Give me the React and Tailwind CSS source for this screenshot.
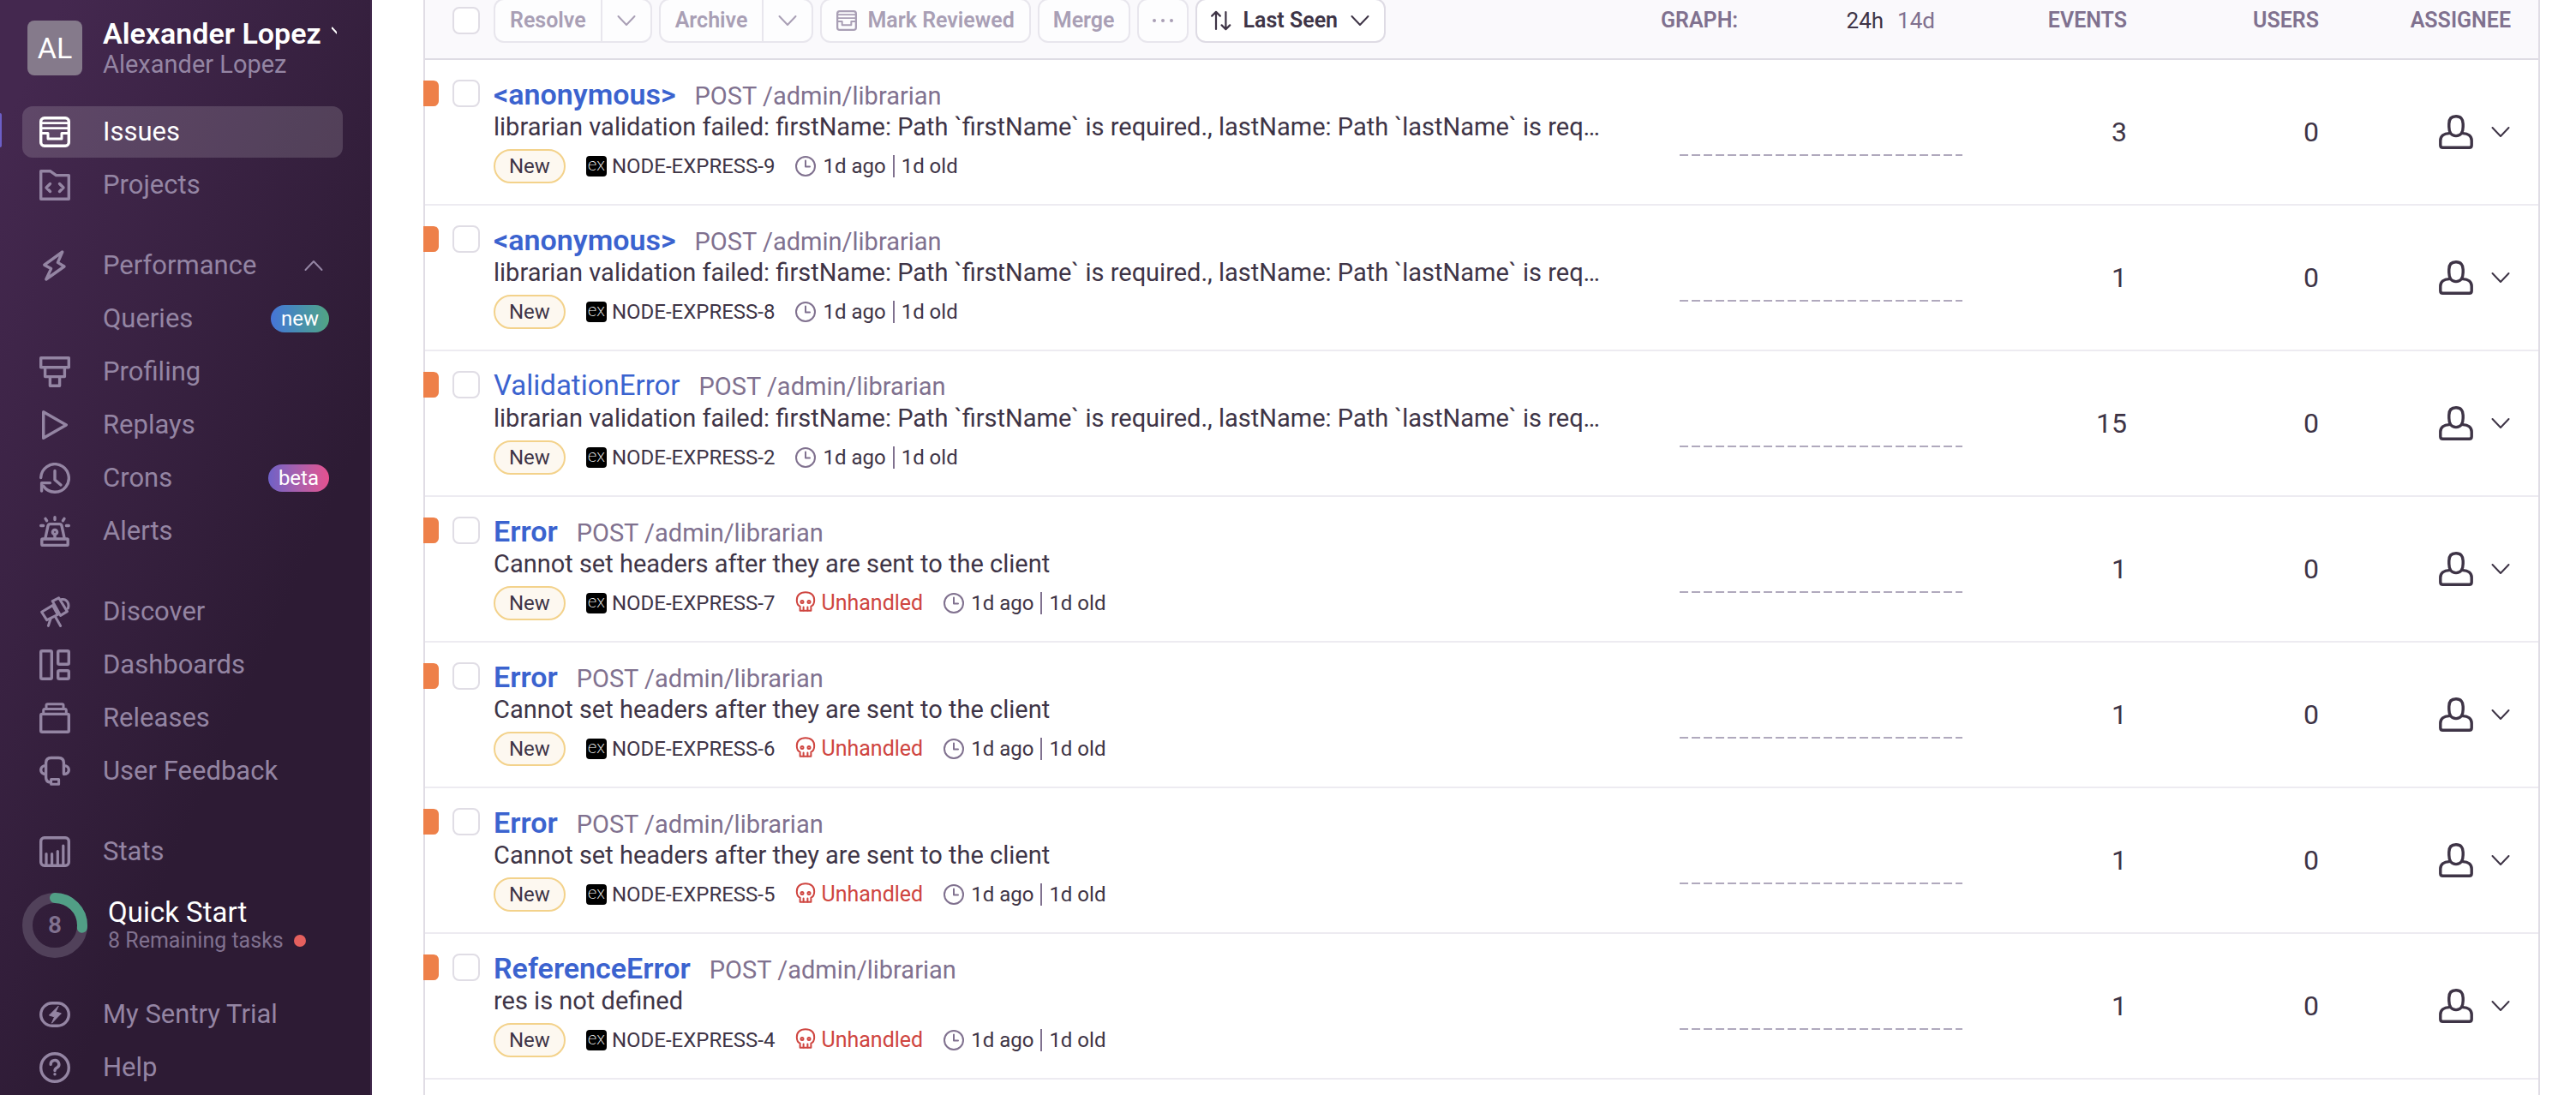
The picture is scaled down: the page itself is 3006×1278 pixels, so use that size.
import React from "react";

function Icon({ children, className = "size-9", box = 36, stroke = 3.4 }) {
  return (
    <svg
      viewBox={`0 0 ${box} ${box}`}
      className={`shrink-0 ${className}`}
      fill="none"
      stroke="currentColor"
      strokeWidth={stroke}
      strokeLinecap="round"
      strokeLinejoin="round"
      aria-hidden="true"
    >
      {children}
    </svg>
  );
}

const issuesShape = (
  <>
    <rect x="1.7" y="1.7" width="32.6" height="32.6" rx="4" />
    <path d="M2 7.6H34M2 13.6H34" strokeWidth="2.6" />
    <path d="M2 19.4H10V26H26V19.4H34" strokeWidth="3" />
  </>
);

const shapes = {
  issues: issuesShape,
  projects: (
    <>
      <path d="M1.7 1.7H12.5L19.5 6.6H34.3V34.3H1.7Z" />
      <path d="M12.5 16.5L8 21L12.5 25.5M23.5 16.5L28 21L23.5 25.5" />
    </>
  ),
  performance: <path d="M26.8 2L5.8 17.2L13.6 21.6L7.8 34L29 19L21.4 14.4Z" />,
  profiling: (
    <>
      <rect x="1.7" y="1.7" width="32.6" height="11" />
      <path d="M6.6 12.7V23.6H29.4V12.7M12.4 23.6V34.3H23.6V23.6" />
    </>
  ),
  replays: <path d="M4.7 2.7L31.3 18L4.7 33.3Z" />,
  crons: (
    <>
      <path d="M1.7 17.5A16.3 16.3 0 1 1 4.6 27.3" />
      <path d="M2.6 33V23.6H12.4M18 9.5V20L25 26" />
    </>
  ),
  alerts: (
    <>
      <rect x="2.8" y="27" width="30.4" height="7.4" rx="1" />
      <path d="M6.8 26.5L10 11.6Q10.6 9.6 12.6 9.6H23.4Q25.4 9.6 26 11.6L29.2 26.5" />
      <path d="M18 1.7V4.6M7 3.4L8.6 5.8M29 3.4L27.4 5.8M1.7 11.5H4.6M31.4 11.5H34.3M18 21.5V26" />
      <circle cx="18" cy="19" r="2.6" />
    </>
  ),
  discover: (
    <>
      <path d="M2.6 18.2L15.4 10.6L21.4 21.4L8.6 27.6Z" strokeWidth="3" />
      <path d="M15.2 5.6L22.6 1.8L32.4 17.6L24.6 22.4Z" strokeWidth="3" />
      <path d="M26 3.6C31.5 2.6 35.4 8 33.4 14M13 26.2L10.4 34.4M18.4 23.4L24.6 34.4" strokeWidth="3" />
    </>
  ),
  dashboards: (
    <>
      <rect x="1.7" y="1.7" width="12.6" height="32.6" rx="1.5" />
      <rect x="21.7" y="1.7" width="12.6" height="15.6" rx="1.5" />
      <rect x="21.7" y="24.7" width="12.6" height="9.6" rx="1.5" />
    </>
  ),
  releases: (
    <>
      <rect x="1.7" y="13.4" width="32.6" height="20.9" rx="1.5" />
      <path d="M4.7 13V9Q4.7 7.6 6.2 7.6H29.8Q31.3 7.6 31.3 9V13M8 7.4V3.2Q8 1.7 9.5 1.7H26.5Q28 1.7 28 3.2V7.4" strokeWidth="3" />
    </>
  ),
  feedback: (
    <>
      <path d="M7.6 22.5V8.5Q7.6 2.5 13.6 2.5H22.4Q28.4 2.5 28.4 8.5V21M7.6 22V25Q7.6 31 13 31" />
      <path d="M7.4 11.6C-.2 11.6-.2 21.6 7.4 21.6M28.6 11.6C36.2 11.6 36.2 21.6 28.6 21.6" />
      <rect x="13.6" y="27.6" width="9" height="5.6" strokeWidth="3" />
    </>
  ),
  stats: (
    <>
      <rect x="1.7" y="1.7" width="32.6" height="32.6" rx="4" />
      <path d="M8 20.5V33M14.6 20.5V33M21.3 17.5V33M27.8 11V33" strokeWidth="3.2" />
    </>
  ),
  trial: (
    <>
      <rect x="1.7" y="4.7" width="32.6" height="26.6" rx="13.3" />
      <path d="M22 8.4L11.4 19L17.6 20.8L14.4 28.2L25.4 16.8L19.4 15Z" fill="currentColor" strokeWidth="1" />
    </>
  ),
  help: (
    <>
      <circle cx="18" cy="18" r="16.3" />
      <path d="M13.2 14.4A4.8 4.6 0 1 1 20.6 18Q18 19.4 18 21.6M18 25.6V25.7" />
    </>
  ),
};

function Chevron({ up, className = "size-6" }) {
  return (
    <Icon className={className} box={24} stroke={2}>
      <path d={up ? "M2.5 17L12 7L21.5 17" : "M2.5 7L12 17L21.5 7"} />
    </Icon>
  );
}

function NavItem({ icon, label, active, tag, tagClass, expanded }) {
  return (
    <li className="relative">
      {active && <span className="absolute top-2 -left-[26px] h-10 w-0.5 rounded-r bg-[#6c5fc7]" />}
      <a
        href="#"
        className={`flex h-[60px] items-center rounded-xl pr-4 pl-5 text-[31px] ${
          active ? "bg-white/15 text-white" : "text-[#9485a3]"
        }`}
      >
        <span className="mr-[38px] size-9">{icon && <Icon>{shapes[icon]}</Icon>}</span>
        <span className="flex-1">{label}</span>
        {tag && (
          <span className={`flex h-8 items-center rounded-full px-3 text-[24px] text-white ${tagClass}`}>{tag}</span>
        )}
        {expanded && <Chevron up className="mr-1.5 size-6" />}
      </a>
    </li>
  );
}

function Sidebar() {
  return (
    <aside className="w-[434px] shrink-0 border-r-2 border-[#41284c] bg-[linear-gradient(294deg,#2d1b34_35%,#44284f_93%)] pt-5 pr-8 pl-[26px]">
      <button className="mb-8 flex w-full items-center gap-6 overflow-hidden pl-1.5 text-left">
        <span className="flex size-16 shrink-0 items-center justify-center rounded-lg bg-[#857a8b] text-[34px] text-white">
          AL
        </span>
        <span className="min-w-0 whitespace-nowrap">
          <span className="flex items-center gap-3">
            <span className="text-[34px] leading-[38px] font-semibold text-white">Alexander Lopez</span>
            <svg viewBox="0 0 6 9" className="mb-2 h-[9px] w-1.5 text-white" fill="none" stroke="currentColor" strokeWidth="2" aria-hidden="true">
              <path d="M0 1L7 8.5" />
            </svg>
          </span>
          <span className="block text-[29px] leading-[34px] text-[#9485a3]">Alexander Lopez</span>
        </span>
      </button>
      <nav aria-label="Primary">
        <ul className="flex flex-col gap-0.5">
          <NavItem icon="issues" label="Issues" active />
          <NavItem icon="projects" label="Projects" />
        </ul>
        <ul className="mt-[34px] flex flex-col gap-0.5">
          <NavItem icon="performance" label="Performance" expanded />
          <NavItem label="Queries" tag="new" tagClass="bg-linear-to-r from-[#4674d8] to-[#52a482]" />
          <NavItem icon="profiling" label="Profiling" />
          <NavItem icon="replays" label="Replays" />
          <NavItem icon="crons" label="Crons" tag="beta" tagClass="bg-linear-to-r from-[#6e60c6] to-[#e5508f]" />
          <NavItem icon="alerts" label="Alerts" />
        </ul>
        <ul className="mt-[34px] flex flex-col gap-0.5">
          <NavItem icon="discover" label="Discover" />
          <NavItem icon="dashboards" label="Dashboards" />
          <NavItem icon="releases" label="Releases" />
          <NavItem icon="feedback" label="User Feedback" />
        </ul>
        <ul className="mt-[34px]">
          <NavItem icon="stats" label="Stats" />
        </ul>
        <button className="mt-[18px] flex h-[76px] w-full items-center gap-6 text-left">
          <span className="relative flex size-[76px] items-center justify-center text-[28px] font-semibold text-[#80718f]">
            <svg viewBox="0 0 76 76" className="absolute inset-0 size-full -rotate-90" fill="none" strokeWidth="12" aria-hidden="true">
              <circle cx="38" cy="38" r="32" stroke="#51415a" />
              <circle cx="38" cy="38" r="32" stroke="#519f86" strokeLinecap="round" strokeDasharray="53 202" />
            </svg>
            8
          </span>
          <span>
            <span className="block text-[33px] leading-9 text-white">Quick Start</span>
            <span className="flex items-center gap-3 text-[25px] leading-[30px] text-[#80718f]">
              8 Remaining tasks
              <span className="size-3.5 rounded-full bg-[#e5605e]" />
            </span>
          </span>
        </button>
        <ul className="mt-9 flex flex-col gap-0.5">
          <NavItem icon="trial" label="My Sentry Trial" />
          <NavItem icon="help" label="Help" />
        </ul>
      </nav>
    </aside>
  );
}

function Checkbox({ label, className = "" }) {
  return (
    <input
      type="checkbox"
      aria-label={label}
      className={`size-8 shrink-0 appearance-none rounded-lg border-2 border-[#e0dde5] bg-white ${className}`}
    />
  );
}

const buttonBase = "flex h-[52px] items-center border-2 border-[#e8e6ed] bg-[#fdfdfe] text-[#a99fb5]";

function SplitButton({ label }) {
  return (
    <div className="flex">
      <button className={`${buttonBase} rounded-l-xl border-r-0 px-[17px]`}>{label}</button>
      <button className={`${buttonBase} rounded-r-xl px-4`} aria-label={`${label} options`}>
        <Chevron />
      </button>
    </div>
  );
}

function Toolbar() {
  return (
    <div className="flex items-center gap-2 text-[25px] font-semibold">
      <SplitButton label="Resolve" />
      <SplitButton label="Archive" />
      <button className={`${buttonBase} gap-3 rounded-xl px-[17px]`}>
        <Icon className="size-6">{issuesShape}</Icon>
        Mark Reviewed
      </button>
      <button className={`${buttonBase} rounded-xl px-4`}>Merge</button>
      <button className={`${buttonBase} rounded-xl px-4`} aria-label="More actions">
        <svg viewBox="0 0 24 24" className="size-6" fill="currentColor" aria-hidden="true">
          <circle cx="2" cy="12" r="2" />
          <circle cx="12" cy="12" r="2" />
          <circle cx="22" cy="12" r="2" />
        </svg>
      </button>
      <button className="flex h-[52px] items-center gap-3.5 rounded-xl border-2 border-[#dedbe4] bg-white px-4 text-[#3e3446]">
        <Icon className="size-6" box={24} stroke={2.2}>
          <path d="M6 22V2M1.2 6.6L6 1.8L10.8 6.6M17.4 2V22M12.6 17.4L17.4 22.2L22.2 17.4" />
        </Icon>
        Last Seen
        <Chevron />
      </button>
    </div>
  );
}

const pathMessage =
  "librarian validation failed: firstName: Path `firstName` is required., lastName: Path `lastName` is req…";
const headersMessage = "Cannot set headers after they are sent to the client";

const issues = [
  { id: 9, title: "<anonymous>", message: pathMessage, events: 3 },
  { id: 8, title: "<anonymous>", message: pathMessage, events: 1 },
  { id: 2, title: "ValidationError", message: pathMessage, events: 15, read: true },
  { id: 7, title: "Error", message: headersMessage, events: 1, unhandled: true },
  { id: 6, title: "Error", message: headersMessage, events: 1, unhandled: true },
  { id: 5, title: "Error", message: headersMessage, events: 1, unhandled: true },
  { id: 4, title: "ReferenceError", message: "res is not defined", events: 1, unhandled: true },
];

function IssueRow({ issue }) {
  const name = `NODE-EXPRESS-${issue.id}`;
  return (
    <tr className="h-[170px] [&>td]:border-b-2 [&>td]:border-[#edebf1]">
      <td className="relative pt-5 pl-8 align-top">
        <span className="absolute top-6 -left-0.5 h-[30px] w-[18px] rounded-r-md bg-[#ee8049]" />
        <div className="flex gap-4">
          <Checkbox label={`Select ${name}`} className="mt-[3px]" />
          <div className="min-w-0 flex-1 pr-8">
            <div className="flex h-10 items-baseline gap-[22px] leading-10">
              <a href="#" className={`text-[#3b63cf] ${issue.read ? "text-[33px]" : "text-[34px] font-semibold"}`}>
                {issue.title}
              </a>
              <span className="text-[29px] text-[#80718f]">POST /admin/librarian</span>
            </div>
            <p className="truncate text-[29px] leading-9">{issue.message}</p>
            <div className="mt-2 flex h-10 items-center gap-6 text-[24px]">
              <span className="flex h-10 items-center rounded-full border-2 border-[#f3d28b] bg-[#fdf8f0] px-4">New</span>
              <span className="flex items-center gap-1.5">
                <span className="flex size-6 items-center justify-center rounded bg-black pb-1 text-[20px] leading-5 font-extralight text-white">
                  ex
                </span>
                {name}
              </span>
              {issue.unhandled && (
                <span className="flex items-center gap-1.5 text-[25px] text-[#cf4540]">
                  <Icon className="mb-1 size-6" box={24} stroke={2}>
                    <path d="M5.6 17.6C2.2 16.6 1.8 13.6 1.8 10.6C1.6 5 5.6 1.2 12 1.2S22.4 5 22.2 10.6C22.2 13.6 21.8 16.6 18.4 17.6V22.8H5.6Z" />
                    <path d="M9.6 18.5V22.5M14.4 18.5V22.5" />
                    <circle cx="8" cy="12.6" r="1.5" />
                    <circle cx="16" cy="12.6" r="1.5" />
                  </Icon>
                  Unhandled
                </span>
              )}
              <span className="flex items-center gap-2">
                <Icon className="size-6 text-[#80718f]" box={24} stroke={2}>
                  <circle cx="12" cy="12" r="11" />
                  <path d="M12 5.5V12.5H17" />
                </Icon>
                1d ago
                <span className="h-[26px] w-0.5 bg-[#80718f]" />
                1d old
              </span>
            </div>
          </div>
        </div>
      </td>
      <td className="pt-[54px] pr-8 pl-[38px]">
        <svg className="h-0.5 w-full" aria-label="No events in the last 24 hours">
          <line x1="0" y1="1" x2="100%" y2="1" stroke="#b0a9bd" strokeWidth="2" strokeDasharray="10 4" />
        </svg>
      </td>
      <td className="pr-4 text-right text-[32px]">{issue.events}</td>
      <td className="pr-4 text-right text-[32px]">0</td>
      <td className="pr-8">
        <button className="ml-auto flex items-center gap-5" aria-label={`Assign ${name}`}>
          <Icon className="size-10" box={40} stroke={3.4}>
            <path d="M20 1.8C14.5 1.8 11.8 5 11.8 10.5V14C11.8 20 14.5 24.6 20 24.6S28.2 20 28.2 14V10.5C28.2 5 25.5 1.8 20 1.8Z" />
            <path d="M12.4 21.6C6 21.4 1.8 24.8 1.8 30V35.4Q1.8 38.2 4.6 38.2H35.4Q38.2 38.2 38.2 35.4V30C38.2 24.8 34 21.4 27.6 21.6" />
          </Icon>
          <Chevron />
        </button>
      </td>
    </tr>
  );
}

export default function App() {
  return (
    <div className="flex h-screen overflow-hidden bg-white font-['Roboto','Liberation_Sans',sans-serif] text-[#3e3446]">
      <Sidebar />
      <main className="min-w-0 flex-1 pr-[42px] pl-[60px]">
        <section className="-mt-5 min-h-[calc(100%+20px)] border-x-2 border-[#e0dde5]">
          <table className="w-full table-fixed border-separate border-spacing-0">
            <colgroup>
              <col />
              <col className="w-[400px]" />
              <col className="w-[176px]" />
              <col className="w-[224px]" />
              <col className="w-[240px]" />
            </colgroup>
            <thead>
              <tr className="h-[90px] text-[25px] text-[#80718f] [&>th]:border-b-2 [&>th]:border-[#dedce4] [&>th]:bg-[#faf9fc] [&>th]:font-semibold">
                <th className="pl-8">
                  <div className="flex items-center gap-4">
                    <Checkbox label="Select all" />
                    <Toolbar />
                  </div>
                </th>
                <th className="pr-16 pl-4">
                  <div className="flex items-center gap-4">
                    <span className="flex-1 text-left">GRAPH:</span>
                    <button className="text-[26px] font-normal text-[#3e3446]">24h</button>
                    <button className="text-[26px] font-normal">14d</button>
                  </div>
                </th>
                <th className="pr-4 text-right">EVENTS</th>
                <th className="pr-4 text-right">USERS</th>
                <th className="pr-8 text-right">ASSIGNEE</th>
              </tr>
            </thead>
            <tbody>
              {issues.map((issue) => (
                <IssueRow key={issue.id} issue={issue} />
              ))}
            </tbody>
          </table>
        </section>
      </main>
    </div>
  );
}
